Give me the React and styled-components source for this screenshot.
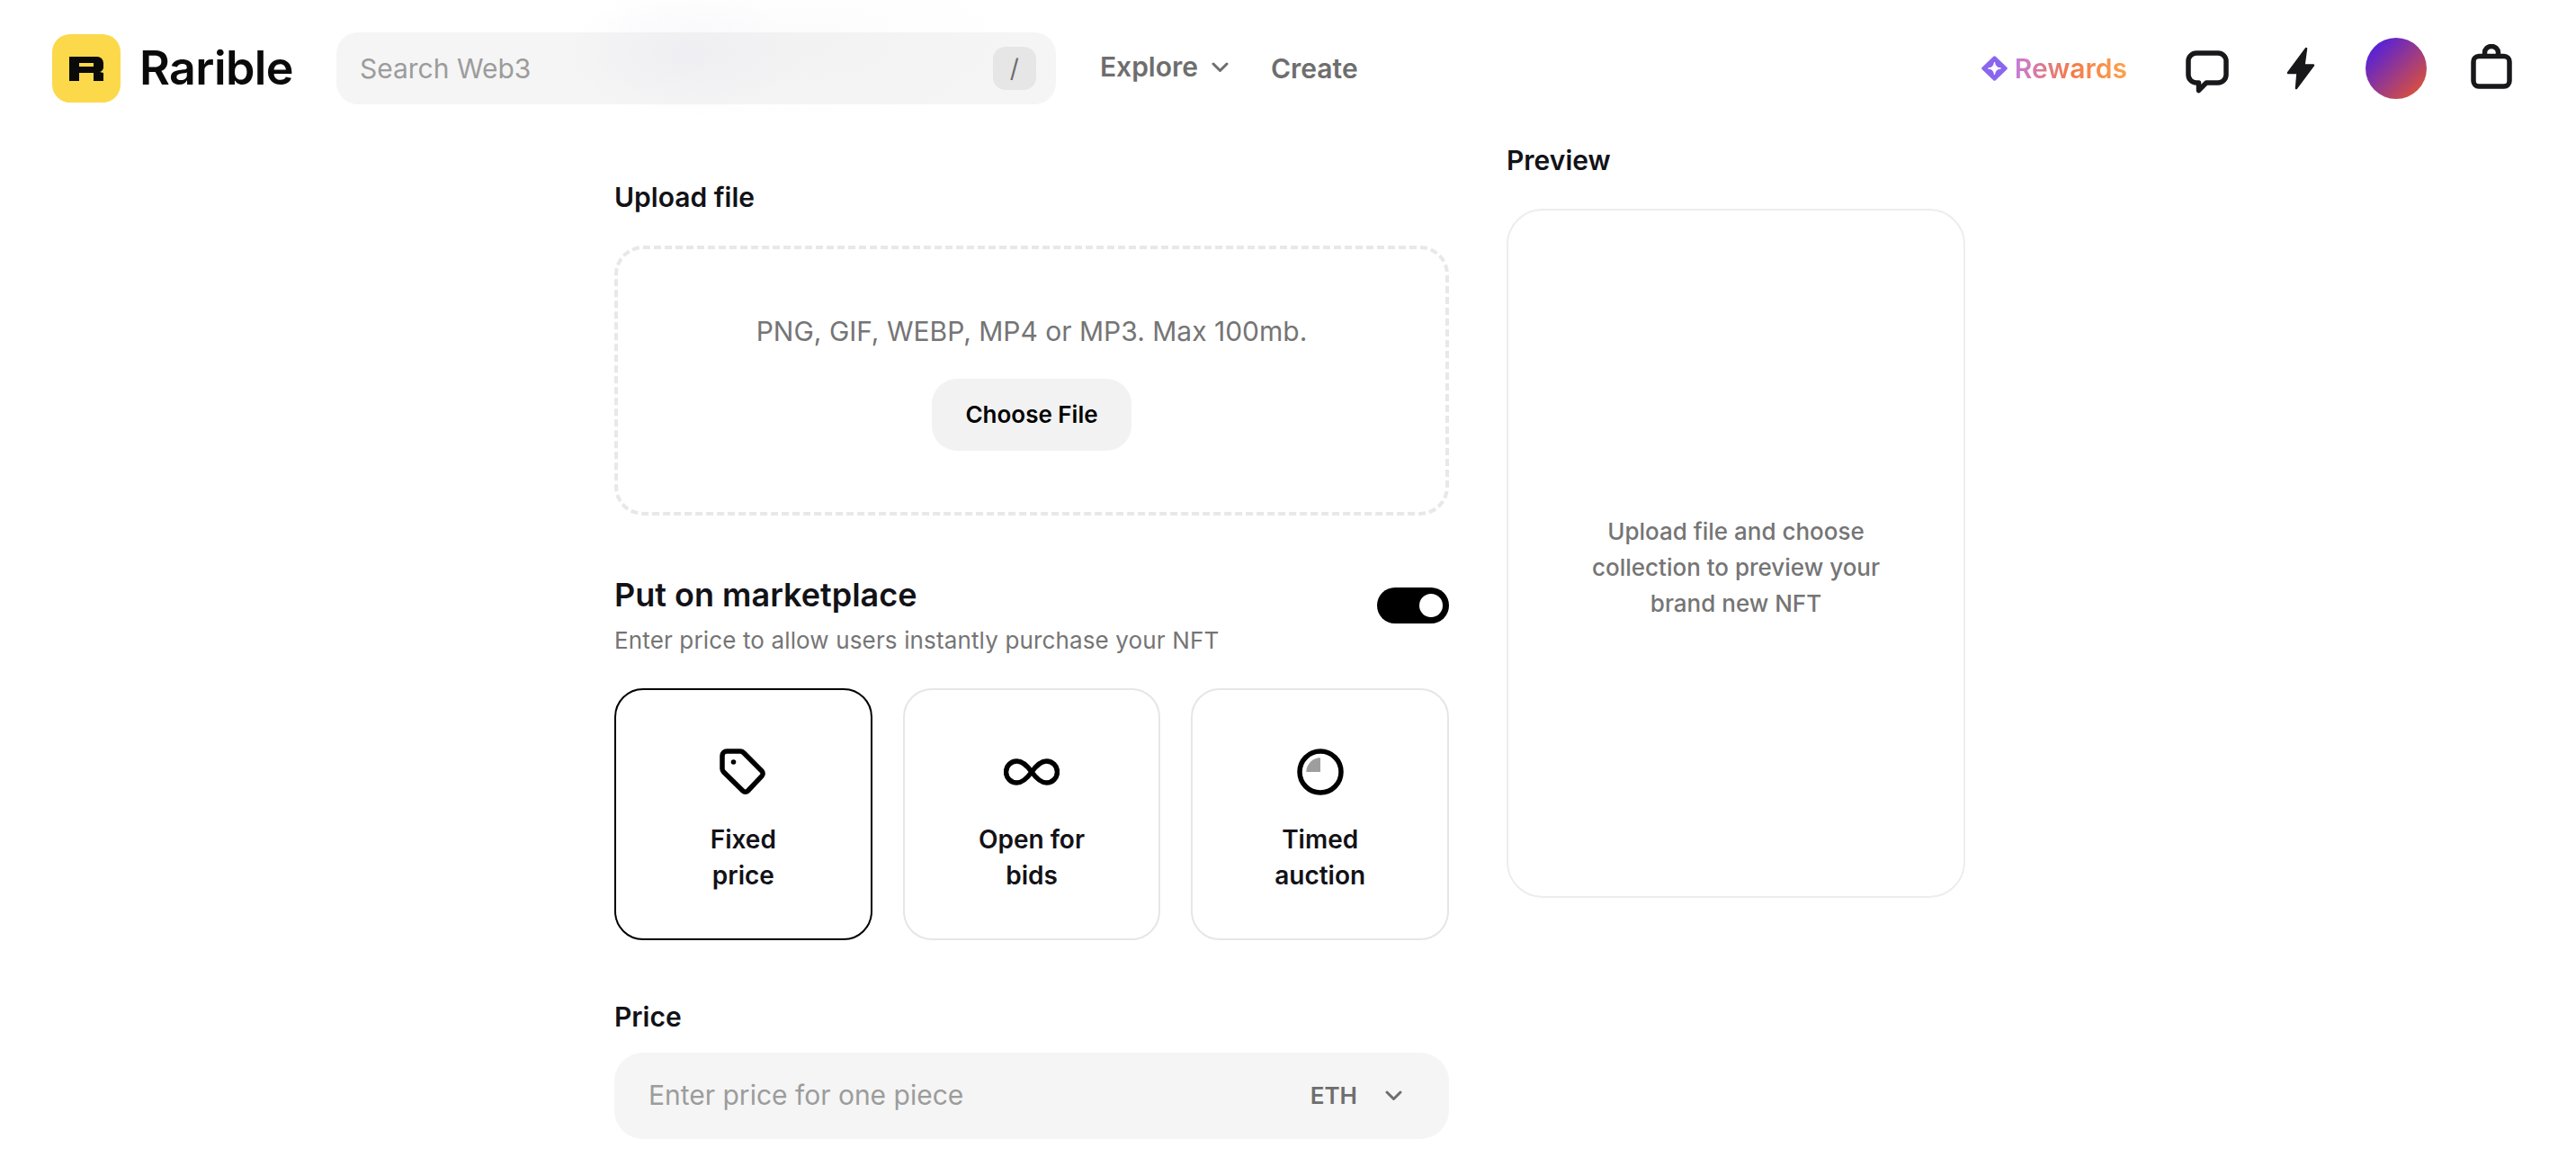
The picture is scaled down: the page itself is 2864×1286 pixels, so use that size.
import React from "react";
import styled, { createGlobalStyle } from "styled-components";

const Global = createGlobalStyle`
  html, body { margin: 0; padding: 0; height: 100%; overflow: hidden; background: #fff; }
  body { font-family: "Inter", "Liberation Sans", sans-serif; color: #121217; }
  * { box-sizing: border-box; }
`;

const Header = styled.header`
  position: relative;
  display: flex;
  align-items: center;
  height: 152px;
  padding: 0 71px 0 58px;
  &::after {
    content: "";
    position: absolute;
    inset: 0 0 0 0;
    pointer-events: none;
    background:
      radial-gradient(ellipse 130px 70px at 760px 60px, rgba(190, 190, 235, 0.09), transparent),
      radial-gradient(ellipse 260px 90px at 880px 50px, rgba(190, 190, 200, 0.05), transparent);
  }
`;
const LogoMark = styled.div`
  width: 76px;
  height: 76px;
  border-radius: 20px;
  background: #fbd94b;
  display: flex;
  align-items: center;
  justify-content: center;
`;
const Brand = styled.div`
  margin-left: 21px;
  font-size: 52px;
  font-weight: 600;
  letter-spacing: -0.6px;
  line-height: 60px;
  color: #0a0a0a;
`;
const Search = styled.div`
  margin-left: 48px;
  width: 800px;
  height: 80px;
  border-radius: 24px;
  background: #f5f5f5;
  display: flex;
  align-items: center;
  justify-content: space-between;
  padding: 0 22px 0 26px;
  font-size: 30px;
  color: #9c9c9c;
`;
const KeyHint = styled.kbd`
  width: 48px;
  height: 48px;
  border-radius: 14px;
  background: #e6e6e6;
  color: #6e6e6e;
  display: flex;
  align-items: center;
  justify-content: center;
  font-family: inherit;
  font-size: 28px;
`;
const NavLink = styled.a`
  margin-left: ${(p) => p.$ml}px;
  display: flex;
  align-items: center;
  gap: 15px;
  font-size: 30px;
  font-weight: 600;
  color: #6e6e6e;
  padding-bottom: ${(p) => p.$lift || 0}px;
`;
const RightGroup = styled.div`
  margin-left: auto;
  display: flex;
  align-items: center;
`;
const Rewards = styled.a`
  display: flex;
  align-items: center;
  gap: 8px;
  font-size: 30px;
  font-weight: 600;
`;
const GradientText = styled.span`
  background: linear-gradient(90deg, #c47cdc 0%, #f47a4a 50%, #fba24a 100%);
  -webkit-background-clip: text;
  background-clip: text;
  color: transparent;
`;
const IconSlot = styled.div`
  margin-left: ${(p) => p.$ml}px;
  display: flex;
  align-items: center;
  transform: translateY(${(p) => p.$dy || 0}px);
`;
const Avatar = styled.div`
  margin-left: 56px;
  width: 68px;
  height: 68px;
  border-radius: 50%;
  background: linear-gradient(135deg, #5320dc 12%, #d8503f 88%);
`;

const Main = styled.main`
  display: flex;
  gap: 64px;
  padding: 6px 0 0 683px;
`;
const FormColumn = styled.div`
  width: 928px;
  padding-top: 41px;
  display: flex;
  flex-direction: column;
`;
const SideColumn = styled.aside`
  width: 510px;
`;
const Label = styled.h3`
  margin: 0 0 34px;
  font-size: 30px;
  line-height: 40px;
  font-weight: 600;
`;
const DropZone = styled.div`
  height: 300px;
  border: 4px dashed #e8e8e8;
  border-radius: 32px;
  display: flex;
  flex-direction: column;
  align-items: center;
  padding-top: 71px;
  gap: 33px;
`;
const DropHint = styled.p`
  margin: 0;
  font-size: 30px;
  line-height: 40px;
  color: #757575;
`;
const FileButton = styled.button`
  width: 222px;
  height: 80px;
  border: 0;
  border-radius: 28px;
  background: #f2f2f2;
  color: #000;
  font: 600 26px/40px "Inter", sans-serif;
`;
const MarketRow = styled.div`
  margin-top: 64px;
  display: flex;
  justify-content: space-between;
  align-items: flex-start;
`;
const MarketTitle = styled.h2`
  margin: 0;
  font-size: 36px;
  line-height: 48px;
  font-weight: 600;
`;
const MarketSub = styled.p`
  margin: 7px 0 0;
  font-size: 26px;
  letter-spacing: 0.14px;
  line-height: 40px;
  color: #757575;
`;
const Toggle = styled.div`
  margin-top: 16px;
  width: 80px;
  height: 40px;
  border-radius: 20px;
  background: #000;
  display: flex;
  align-items: center;
  justify-content: flex-end;
  padding-right: 7px;
  &::after {
    content: "";
    width: 26px;
    height: 26px;
    border-radius: 50%;
    background: #fff;
  }
`;
const SaleGrid = styled.div`
  margin-top: 33px;
  display: grid;
  grid-template-columns: repeat(3, 1fr);
  gap: 34px;
`;
const SaleCard = styled.div`
  height: 280px;
  border-radius: 32px;
  border: 2px solid ${(p) => (p.$selected ? "#000" : "#e6e6e6")};
  padding-top: 65px;
  display: flex;
  flex-direction: column;
  align-items: center;
  gap: 29px;
`;
const SaleIcon = styled.div`
  height: 52px;
  display: flex;
  align-items: center;
  justify-content: center;
`;
const SaleName = styled.div`
  width: 140px;
  text-align: center;
  font-size: 28px;
  line-height: 40px;
  font-weight: 600;
`;
const PriceLabel = styled(Label)`
  margin: 65px 0 20px;
`;
const PriceField = styled.div`
  height: 96px;
  border-radius: 32px;
  background: #f5f5f5;
  display: flex;
  align-items: center;
  padding: 0 52px 2px 38px;
  font-size: 30px;
  color: #9c9c9c;
`;
const Currency = styled.span`
  margin-left: auto;
  margin-right: 31px;
  font-size: 26px;
  font-weight: 600;
  color: #6e6e6e;
`;
const PreviewCard = styled.div`
  height: 766px;
  border: 2px solid #ededed;
  border-radius: 40px;
  display: flex;
  align-items: center;
  justify-content: center;
  text-align: center;
  padding-top: 32px;
  font-size: 26px;
  line-height: 40px;
  font-weight: 500;
  color: #757575;
`;

const Chevron = ({ w = 19, h = 11 }) => (
  <svg width={w} height={h} viewBox="0 0 19 11" fill="none" stroke="#6e6e6e" strokeWidth="3" strokeLinecap="round" strokeLinejoin="round">
    <path d="M2 2l7.5 7.5L17 2" />
  </svg>
);

export default function App() {
  return (
    <>
      <Global />
      <Header>
        <LogoMark>
          <svg width="38" height="27" viewBox="0 0 38 27">
            <path fillRule="evenodd" fill="#0a0a0a" d="M0 0H31a7 7 0 0 1 7 7V11a6 6 0 0 1-4 6L38 18V27H27V18H11V27H0ZM11 7V11H27V7Z" />
          </svg>
        </LogoMark>
        <Brand>Rarible</Brand>
        <Search>
          <span>Search Web3</span>
          <KeyHint>/</KeyHint>
        </Search>
        <NavLink $ml={49} $lift={4}>
          Explore <Chevron />
        </NavLink>
        <NavLink $ml={47}>Create</NavLink>
        <RightGroup>
          <Rewards>
            <svg width="29" height="28" viewBox="0 0 29 28">
              <path d="M14.5 2 L27 14 L14.5 26 L2 14 Z" fill="#8a66ee" stroke="#8a66ee" strokeWidth="3.5" strokeLinejoin="round" />
              <path d="M14.5 7Q15.2 13.3 21.5 14Q15.2 14.7 14.5 21Q13.8 14.7 7.5 14Q13.8 13.3 14.5 7Z" fill="#fff" stroke="#fff" strokeWidth="1" />
            </svg>
            <GradientText>Rewards</GradientText>
          </Rewards>
          <IconSlot $ml={65} $dy={4}>
            <svg width="48" height="48" viewBox="0 0 48 48" fill="none" stroke="#18181b" strokeWidth="5.5" strokeLinejoin="round">
              <path d="M12 3H36a9 9 0 0 1 9 9V27a9 9 0 0 1-9 9H23L14.5 44.5V36H12a9 9 0 0 1-9-9V12a9 9 0 0 1 9-9Z" />
            </svg>
          </IconSlot>
          <IconSlot $ml={64}>
            <svg width="32" height="48" viewBox="0 0 32 48" fill="#18181b" stroke="#18181b" strokeWidth="2.5" strokeLinejoin="round">
              <path d="M22 2L2 29H12.5L11 46L30 20.5H19.5Z" />
            </svg>
          </IconSlot>
          <Avatar />
          <IconSlot $ml={49} $dy={-2}>
            <svg width="46" height="50" viewBox="0 0 46 50" fill="none" stroke="#18181b" strokeWidth="5.5" strokeLinejoin="round">
              <rect x="3" y="13.5" width="40" height="33.5" rx="6" />
              <path d="M15.5 13V9.5a7.5 7 0 0 1 15 0V13" />
            </svg>
          </IconSlot>
        </RightGroup>
      </Header>
      <Main>
        <FormColumn>
          <Label>Upload file</Label>
          <DropZone>
            <DropHint>PNG, GIF, WEBP, MP4 or MP3. Max 100mb.</DropHint>
            <FileButton>Choose File</FileButton>
          </DropZone>
          <MarketRow>
            <div>
              <MarketTitle>Put on marketplace</MarketTitle>
              <MarketSub>Enter price to allow users instantly purchase your NFT</MarketSub>
            </div>
            <Toggle />
          </MarketRow>
          <SaleGrid>
            <SaleCard $selected>
              <SaleIcon>
                <svg width="52" height="52" viewBox="0 0 52 52" fill="none" stroke="#000" strokeWidth="5.5" strokeLinejoin="round">
                  <path d="M3 8a5 5 0 0 1 5-5H23a5 5 0 0 1 3.6 1.5L47 25a4 4 0 0 1 0 5.6L31.5 47a4 4 0 0 1-5.6 0L4.5 26A5 5 0 0 1 3 22.5Z" />
                  <circle cx="15.5" cy="15" r="2.8" fill="#000" stroke="none" />
                </svg>
              </SaleIcon>
              <SaleName>Fixed price</SaleName>
            </SaleCard>
            <SaleCard>
              <SaleIcon>
                <svg width="62" height="30" viewBox="0 0 62 30" fill="none" stroke="#000" strokeWidth="5.5">
                  <path d="M31 15C26 8 21 3 14.5 3A12 12 0 0 0 14.5 27C21 27 26 22 31 15C36 8 41 3 47.5 3A12 12 0 0 1 47.5 27C41 27 36 22 31 15Z" />
                </svg>
              </SaleIcon>
              <SaleName>Open for bids</SaleName>
            </SaleCard>
            <SaleCard>
              <SaleIcon>
                <svg width="52" height="52" viewBox="0 0 52 52">
                  <circle cx="26" cy="26" r="23" fill="none" stroke="#000" strokeWidth="5.5" />
                  <path d="M26 26H10.3A15.7 15.7 0 0 1 26 10.3Z" fill="#9e9e9e" />
                </svg>
              </SaleIcon>
              <SaleName>Timed auction</SaleName>
            </SaleCard>
          </SaleGrid>
          <PriceLabel as="h3">Price</PriceLabel>
          <PriceField>
            <span>Enter price for one piece</span>
            <Currency>ETH</Currency>
            <Chevron />
          </PriceField>
        </FormColumn>
        <SideColumn>
          <Label>Preview</Label>
          <PreviewCard>
            <div>
              Upload file and choose
              <br />
              collection to preview your
              <br />
              brand new NFT
            </div>
          </PreviewCard>
        </SideColumn>
      </Main>
    </>
  );
}
